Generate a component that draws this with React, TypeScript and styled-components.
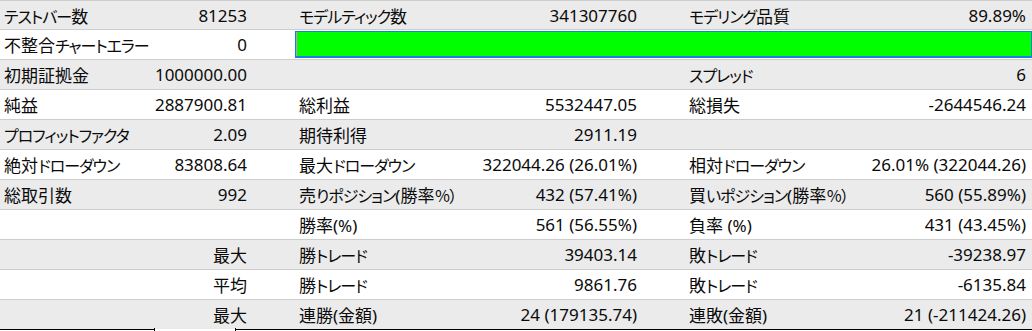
import React from "react";
import styled, { createGlobalStyle } from "styled-components";

const GlobalStyle = createGlobalStyle`
  html, body {
    margin: 0;
    padding: 0;
    background: #ffffff;
  }
  body {
    font-family: "Noto Sans", "Noto Sans CJK JP", sans-serif;
    color: #0a0a0a;
  }
`;

const Report = styled.div`
  width: 1032px;
  border-top: 1px solid #cdcdcd;
  font-size: 17px;
`;

const Row = styled.div<{ $shade: boolean; $first?: boolean; $last?: boolean }>`
  display: grid;
  grid-template-columns: 150px 145px 190px 200px 170px 177px;
  height: ${(p) => (p.$first ? 28 : 29)}px;
  background: ${(p) => (p.$shade ? "#ebebeb" : "#ffffff")};
  border-bottom: ${(p) => (p.$last ? "none" : "1px solid #cdcdcd")};
`;

const Label = styled.div`
  display: flex;
  align-items: center;
  padding-left: 4px;
  white-space: nowrap;
  overflow: visible;
`;

const Value = styled.div<{ $pad: number }>`
  display: flex;
  align-items: center;
  justify-content: flex-end;
  padding-right: ${(p) => p.$pad}px;
  white-space: nowrap;
  overflow: visible;
`;

// Kanji keep the full size, kana are set narrower like the original UI font
const Kanji = styled.span`
  font-family: "Noto Sans CJK JP", sans-serif;
  font-size: 17px;
`;

const Kana = styled.span`
  font-family: "Noto Sans CJK JP", sans-serif;
  font-size: 16px;
  letter-spacing: -1px;
  font-feature-settings: "palt";
`;

const QualityBar = styled.div`
  grid-column: 3 / 7;
  margin: 1px 0 0 0;
  height: 24px;
  background: #00ff00;
  border: 1px solid #1a7fe0;
  border-bottom-width: 2px;
  box-shadow: inset 1px 0 0 #d88bc4;
`;

const Footer = styled.div`
  display: flex;
  height: 2px;
`;

const FooterLine = styled.div<{ $width?: number }>`
  ${(p) => (p.$width ? `width: ${p.$width}px;` : "flex: 1;")}
  border-top: 1px solid #000000;
`;

const FooterGap = styled.div`
  width: 80px;
  border-left: 1px solid #000000;
  border-right: 1px solid #000000;
  margin-top: -1px;
`;

type Cells = [string, string, string, string, string, string];

const rows: Cells[] = [
  ["テストバー数", "81253", "モデルティック数", "341307760", "モデリング品質", "89.89%"],
  ["不整合チャートエラー", "0", "", "", "", ""],
  ["初期証拠金", "1000000.00", "", "", "スプレッド", "6"],
  ["純益", "2887900.81", "総利益", "5532447.05", "総損失", "-2644546.24"],
  ["プロフィットファクタ", "2.09", "期待利得", "2911.19", "", ""],
  ["絶対ドローダウン", "83808.64", "最大ドローダウン", "322044.26 (26.01%)", "相対ドローダウン", "26.01% (322044.26)"],
  ["総取引数", "992", "売りポジション(勝率％）", "432 (57.41%)", "買いポジション(勝率％）", "560 (55.89%)"],
  ["", "", "勝率(%)", "561 (56.55%)", "負率 (%)", "431 (43.45%)"],
  ["", "最大", "勝トレード", "39403.14", "敗トレード", "-39238.97"],
  ["", "平均", "勝トレード", "9861.76", "敗トレード", "-6135.84"],
  ["", "最大", "連勝(金額)", "24 (179135.74)", "連敗(金額)", "21 (-211424.26)"],
];

const Text: React.FC<{ s: string }> = ({ s }) => {
  const parts = s.split(/([\u4E00-\u9FFF]+|[\u3040-\u30FF\uFF00-\uFFEF]+)/).filter(Boolean);
  return (
    <span>
      {parts.map((p, i) => {
        if (/^[\u4E00-\u9FFF]+$/.test(p)) return <Kanji key={i}>{p}</Kanji>;
        if (/^[\u3040-\u30FF\uFF00-\uFFEF]+$/.test(p)) return <Kana key={i}>{p}</Kana>;
        return <React.Fragment key={i}>{p}</React.Fragment>;
      })}
    </span>
  );
};

const App: React.FC = () => {
  return (
    <>
      <GlobalStyle />
      <Report>
        {rows.map((r, i) => (
          <Row key={i} $shade={i % 2 === 0} $first={i === 0} $last={i === rows.length - 1}>
            <Label><Text s={r[0]} /></Label>
            <Value $pad={48}><Text s={r[1]} /></Value>
            {i === 1 ? (
              <QualityBar />
            ) : (
              <>
                <Label><Text s={r[2]} /></Label>
                <Value $pad={48}><Text s={r[3]} /></Value>
                <Label><Text s={r[4]} /></Label>
                <Value $pad={6}><Text s={r[5]} /></Value>
              </>
            )}
          </Row>
        ))}
        <Footer>
          <FooterLine $width={154} />
          <FooterGap />
          <FooterLine />
        </Footer>
      </Report>
    </>
  );
};

export default App;
